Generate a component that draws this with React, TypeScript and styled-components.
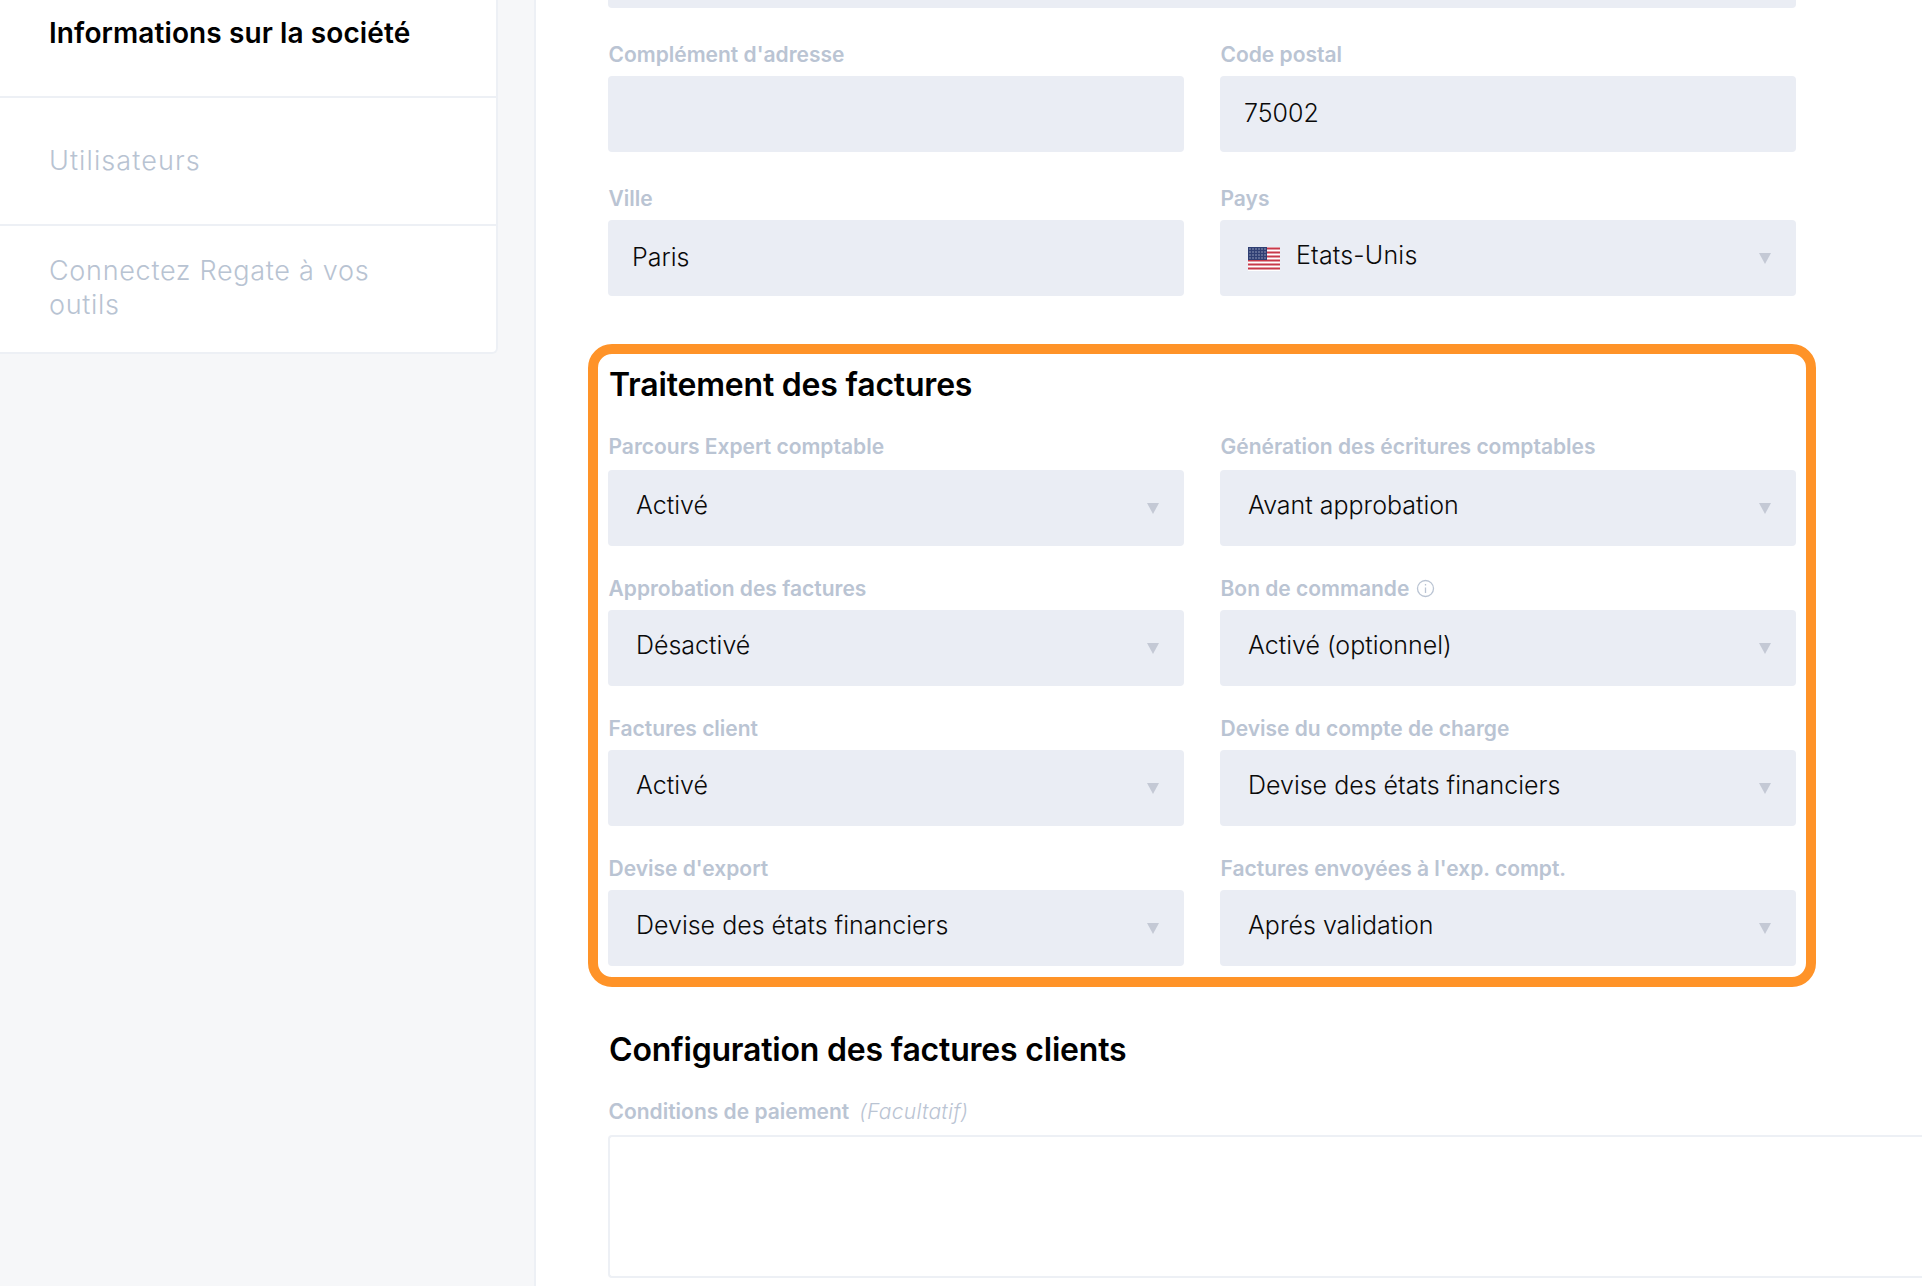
import React from "react";
import styled, { createGlobalStyle } from "styled-components";

const Global = createGlobalStyle`
  html, body { margin: 0; padding: 0; background: #f6f7f9; }
  body { font-family: Inter, "Liberation Sans", sans-serif; -webkit-font-smoothing: antialiased; }
`;

const Page = styled.div`
  display: flex;
  width: 1922px;
  height: 1286px;
  overflow: hidden;
  background: #f6f7f9;
`;

const Aside = styled.aside`
  flex: 0 0 534px;
  box-sizing: border-box;
`;

const NavCard = styled.nav`
  width: 498px;
  box-sizing: border-box;
  background: #fff;
  border: 2px solid #edf0f5;
  border-width: 0 2px 2px 0;
  border-radius: 0 0 6px 0;
`;

const NavItem = styled.div<{ $h: number; $top: number; $spacing?: number }>`
  box-sizing: border-box;
  height: ${(p) => p.$h}px;
  padding: ${(p) => p.$top}px 100px 0 49px;
  font-size: 27px;
  line-height: 34px;
  font-weight: 300;
  letter-spacing: ${(p) => p.$spacing ?? 0.7}px;
  color: #b8c3d2;
  border-bottom: 2px solid #edf0f5;
  &:last-child { border-bottom: 0; }
`;

const ActiveNavItem = styled(NavItem)`
  font-size: 28px;
  font-weight: 600;
  letter-spacing: 0.1px;
  color: #000;
  white-space: nowrap;
`;

const Main = styled.main`
  flex: 1;
  min-width: 0;
  box-sizing: border-box;
  background: #fff;
  border-left: 2px solid #edf0f5;
  padding-left: 72px;
`;

const Grid = styled.div`
  display: grid;
  grid-template-columns: 576px 576px;
  column-gap: 36px;
  width: 1188px;
`;

const Clipped = styled.div`
  grid-column: 1 / -1;
  height: 8px;
  background: #eaedf4;
  border-radius: 0 0 4px 4px;
`;

const Field = styled.div<{ $top: number }>`
  padding-top: ${(p) => p.$top}px;
  min-width: 0;
`;

const Label = styled.label<{ $gap?: number }>`
  display: flex;
  align-items: center;
  height: 24px;
  margin: 0 0 ${(p) => p.$gap ?? 10}px 0.5px;
  font-size: 21px;
  font-weight: 600;
  color: #bac4d3;
  white-space: nowrap;
`;

const Optional = styled.em`
  margin-left: 10px;
  font-weight: 300;
  letter-spacing: 0.3px;
  color: #bac4d3;
`;

const InfoIcon = styled.svg`
  width: 19px;
  height: 19px;
  margin-left: 7px;
  fill: none;
  stroke: #bac4d3;
  stroke-width: 1.3;
`;

const Control = styled.div`
  position: relative;
  display: flex;
  align-items: flex-start;
  box-sizing: border-box;
  height: 76px;
  background: #eaedf4;
  border-radius: 4px;
  padding-left: 28px;
  font-size: 25px;
  font-weight: 300;
  line-height: 70px;
  color: #0a0a0a;
`;

const InputBox = styled(Control)`
  padding-left: 24px;
  line-height: 75px;
`;

const SelectBox = styled(Control)``;

const CountrySelect = styled(Control)`
  letter-spacing: 0.2px;
`;

const Flag = styled.svg`
  flex: none;
  width: 32px;
  height: 24px;
  margin: 27px 16px 0 0;
`;

const Caret = styled.span`
  position: absolute;
  right: 25px;
  top: 33px;
  width: 0;
  height: 0;
  border-left: 6px solid transparent;
  border-right: 6px solid transparent;
  border-top: 11px solid #c4c9d5;
`;

const Highlight = styled.section`
  box-sizing: border-box;
  width: 1228px;
  height: 643px;
  margin: 48px 0 0 -20px;
  padding: 10px 10px 0;
  border: 10px solid #ff9328;
  border-radius: 24px;
`;

const Title = styled.h2`
  margin: 0;
  height: 42px;
  font-size: 32px;
  line-height: 42px;
  font-weight: 600;
  letter-spacing: -0.2px;
  color: #000;
  padding-left: 1px;
`;

const SecondTitle = styled(Title)`
  margin-top: 42px;
`;

const LongField = styled.div`
  margin-top: 28px;
`;

const TextArea = styled.div`
  box-sizing: border-box;
  height: 143px;
  margin-right: -2px;
  border: 2px solid #edf0f5;
  border-right: 0;
  border-radius: 4px 0 0 4px;
  background: #fff;
`;

const UsFlag = () => (
  <Flag viewBox="0 0 32 24" aria-hidden="true">
    <rect width="32" height="24" fill="#fff" />
    {[0, 4, 8, 12, 16, 20].map((y) => (
      <rect key={y} y={y + 0.5} width="32" height="2" fill="#c8394a" />
    ))}
    <rect width="19" height="13" fill="#2f3f73" />
    {[2, 5, 8, 11].flatMap((y) =>
      [2, 5, 8, 11, 14, 17].map((x) => (
        <circle key={`${x}-${y}`} cx={x} cy={y} r="0.7" fill="#aeb6d0" />
      ))
    )}
  </Flag>
);

const rows: [string, string, string, string][] = [
  ["Parcours Expert comptable", "Activé", "Génération des écritures comptables", "Avant approbation"],
  ["Approbation des factures", "Désactivé", "Bon de commande", "Activé (optionnel)"],
  ["Factures client", "Activé", "Devise du compte de charge", "Devise des états financiers"],
  ["Devise d'export", "Devise des états financiers", "Factures envoyées à l'exp. compt.", "Aprés validation"],
];

export default function App() {
  return (
    <Page>
      <Global />
      <Aside>
        <NavCard>
          <ActiveNavItem $h={98} $top={16}>Informations sur la société</ActiveNavItem>
          <NavItem $h={128} $top={46} $spacing={1.1}>Utilisateurs</NavItem>
          <NavItem $h={126} $top={28}>Connectez Regate à vos outils</NavItem>
        </NavCard>
      </Aside>
      <Main>
        <Grid>
          <Clipped />
          <Field $top={34}>
            <Label>Complément d'adresse</Label>
            <InputBox />
          </Field>
          <Field $top={34}>
            <Label>Code postal</Label>
            <InputBox>75002</InputBox>
          </Field>
          <Field $top={34}>
            <Label>Ville</Label>
            <InputBox>Paris</InputBox>
          </Field>
          <Field $top={34}>
            <Label>Pays</Label>
            <CountrySelect>
              <UsFlag />
              Etats-Unis
              <Caret />
            </CountrySelect>
          </Field>
        </Grid>
        <Highlight>
          <Title>Traitement des factures</Title>
          <Grid>
            {rows.map(([l1, v1, l2, v2], i) => (
              <React.Fragment key={l1}>
                <Field $top={i === 0 ? 28 : 30}>
                  <Label $gap={i === 0 ? 12 : 10}>{l1}</Label>
                  <SelectBox>{v1}<Caret /></SelectBox>
                </Field>
                <Field $top={i === 0 ? 28 : 30}>
                  <Label $gap={i === 0 ? 12 : 10}>
                    {l2}
                    {l2 === "Bon de commande" && (
                      <InfoIcon viewBox="0 0 19 19" aria-hidden="true">
                        <circle cx="9.5" cy="9.5" r="8" />
                        <path d="M9.5 8.5v5.5M9.5 5v1.6" />
                      </InfoIcon>
                    )}
                  </Label>
                  <SelectBox>{v2}<Caret /></SelectBox>
                </Field>
              </React.Fragment>
            ))}
          </Grid>
        </Highlight>
        <SecondTitle>Configuration des factures clients</SecondTitle>
        <LongField>
          <Label $gap={12}>
            Conditions de paiement
            <Optional>(Facultatif)</Optional>
          </Label>
          <TextArea />
        </LongField>
      </Main>
    </Page>
  );
}
